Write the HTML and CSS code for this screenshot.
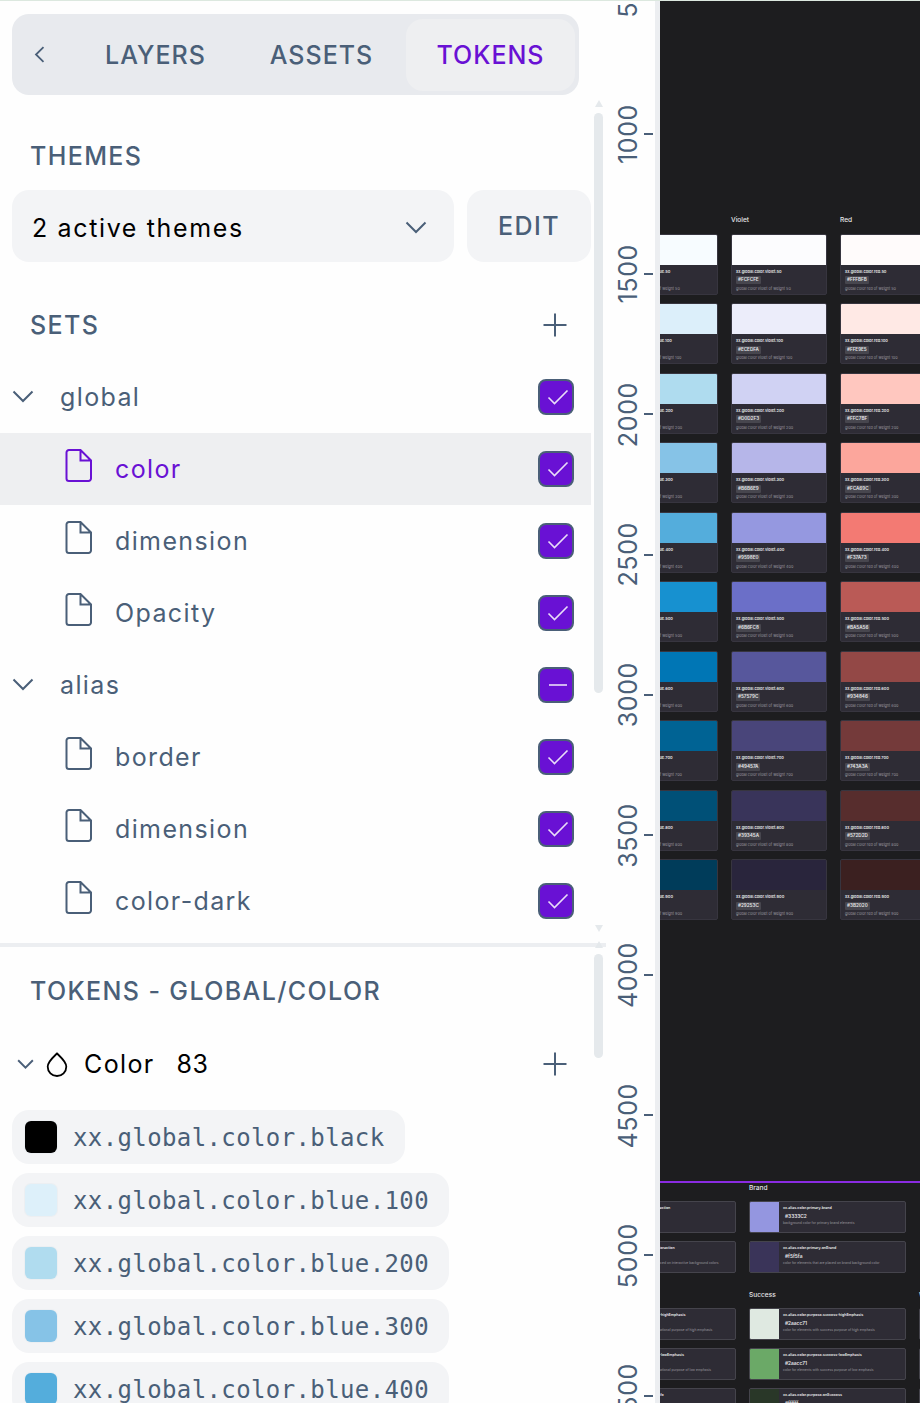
FILE: index.html
```html
<!DOCTYPE html>
<html lang="en">
<head>
<meta charset="utf-8">
<title>Design tokens</title>
<link rel="stylesheet" href="styles.css">
</head>
<body>
<svg width="0" height="0" class="defs">
  <symbol id="file" viewBox="0 0 28 34"><path d="M4 2H15.500L26 12.500V30.500a2.500 2.500 0 0 1-2.500 2.500H4A2.500 2.500 0 0 1 1.500 30.500V4.500A2.500 2.500 0 0 1 4 2zM15.500 2V12.500H26"/></symbol>
  <symbol id="down" viewBox="0 0 22 14"><path d="M1.500 1.500 11 11 20.500 1.500"/></symbol>
  <symbol id="plus" viewBox="0 0 24 24"><path d="M12 .5V23.500M.5 12H23.500"/></symbol>
  <symbol id="check" viewBox="0 0 22 16"><path d="M1.500 8.500 7.500 14.500 20.500 1.500"/></symbol>
  <symbol id="dash" viewBox="0 0 22 16"><path d="M2 8H20"/></symbol>
</svg>
<div class="app">
  <aside class="sidebar">
    <nav class="tabs">
      <span class="back"><svg width="11" height="17" viewBox="0 0 11 17"><path d="M9.500 1.200 2 8.500 9.500 15.800"/></svg></span>
      <span class="tab layers">LAYERS</span>
      <span class="tab assets">ASSETS</span>
      <span class="tab active">TOKENS</span>
    </nav>
    <section class="pane sets-pane">
      <div class="content">
        <h2 class="themes-title">THEMES</h2>
        <div class="theme-row">
          <div class="select"><span>2 active themes</span><svg width="22" height="14"><use href="#down"/></svg></div>
          <div class="edit">EDIT</div>
        </div>
        <div class="sets-head"><h2>SETS</h2><svg width="24" height="24"><use href="#plus"/></svg></div>
        <div class="row group"><svg class="chev" width="22" height="14"><use href="#down"/></svg><span class="label">global</span><i class="box"><svg width="22" height="16"><use href="#check"/></svg></i></div>
        <div class="row item selected"><svg class="file" width="28" height="34"><use href="#file"/></svg><span class="label">color</span><i class="box"><svg width="22" height="16"><use href="#check"/></svg></i></div>
        <div class="row item"><svg class="file" width="28" height="34"><use href="#file"/></svg><span class="label">dimension</span><i class="box"><svg width="22" height="16"><use href="#check"/></svg></i></div>
        <div class="row item"><svg class="file" width="28" height="34"><use href="#file"/></svg><span class="label">Opacity</span><i class="box"><svg width="22" height="16"><use href="#check"/></svg></i></div>
        <div class="row group"><svg class="chev" width="22" height="14"><use href="#down"/></svg><span class="label">alias</span><i class="box"><svg width="22" height="16"><use href="#dash"/></svg></i></div>
        <div class="row item"><svg class="file" width="28" height="34"><use href="#file"/></svg><span class="label">border</span><i class="box"><svg width="22" height="16"><use href="#check"/></svg></i></div>
        <div class="row item"><svg class="file" width="28" height="34"><use href="#file"/></svg><span class="label">dimension</span><i class="box"><svg width="22" height="16"><use href="#check"/></svg></i></div>
        <div class="row item"><svg class="file" width="28" height="34"><use href="#file"/></svg><span class="label">color-dark</span><i class="box"><svg width="22" height="16"><use href="#check"/></svg></i></div>
      </div>
      <div class="bar"><b class="up"></b><b class="thumb long"></b><b class="dn"></b></div>
    </section>
    <section class="pane tokens-pane">
      <div class="content">
        <h2 class="tokens-title">TOKENS - GLOBAL/COLOR</h2>
        <div class="type-row">
          <svg class="small-chev" width="17" height="11" viewBox="0 0 22 14"><path d="M1.500 1.500 11 11 20.500 1.500"/></svg>
          <svg class="drop" width="22" height="26" viewBox="0 0 22 26"><path d="M11 2.500C7 6.500 1.700 10.500 1.700 15.700a9.300 9.300 0 0 0 18.600 0C20.300 10.500 15 6.500 11 2.500z"/></svg>
          <span class="type-name">Color</span><span class="type-count">83</span>
          <svg class="add" width="24" height="24"><use href="#plus"/></svg>
        </div>
        <div class="pills">
          <div class="pill"><i class="c-black"></i><span>xx.global.color.black</span></div>
          <div class="pill"><i class="c-100"></i><span>xx.global.color.blue.100</span></div>
          <div class="pill"><i class="c-200"></i><span>xx.global.color.blue.200</span></div>
          <div class="pill"><i class="c-300"></i><span>xx.global.color.blue.300</span></div>
          <div class="pill"><i class="c-400"></i><span>xx.global.color.blue.400</span></div>
        </div>
      </div>
      <div class="bar"><b class="up"></b><b class="thumb short"></b></div>
    </section>
  </aside>
  <div class="ruler">
    <div class="mark"><span>500</span></div>
    <div class="mark"><span>1000</span></div>
    <div class="mark"><span>1500</span></div>
    <div class="mark"><span>2000</span></div>
    <div class="mark"><span>2500</span></div>
    <div class="mark"><span>3000</span></div>
    <div class="mark"><span>3500</span></div>
    <div class="mark"><span>4000</span></div>
    <div class="mark"><span>4500</span></div>
    <div class="mark"><span>5000</span></div>
    <div class="mark"><span>5500</span></div>
  </div>
  <main class="canvas">
    <div class="palette" id="palette"></div>
    <div class="alias" id="alias"></div>
  </main>
</div>
<script src="board.js"></script>
</body>
</html>
```

FILE: styles.css
```css
* { box-sizing: border-box; }
body { margin: 0; background: #fefefe; font-family: Inter, "Liberation Sans", sans-serif; font-size: 25px; letter-spacing: 1.380px; color: #4a5f78; }
h2 { margin: 0; font-size: 25px; font-weight: 500; line-height: 30px; }
svg { display: block; flex: none; fill: none; stroke: currentColor; stroke-width: 2; }
.defs { position: absolute; }
.app { display: grid; grid-template-columns: 606px 54px 260px; height: 1403px; overflow: hidden; border-top: 1px solid #dce8df; }
.sidebar { display: flex; flex-direction: column; min-width: 0; height: 1402px; overflow: hidden; }

.tabs { display: flex; flex: none; align-items: center; width: 567px; height: 81px; margin: 13px 0 0 12px; padding-right: 4px; background: #e8eaee; border-radius: 17px; }
.back { width: 54px; padding-left: 22px; }
.back svg { stroke-width: 1.8; }
.tab { font-weight: 500; height: 72px; line-height: 72px; text-align: center; white-space: nowrap; letter-spacing: 1px; }
.layers { width: 179px; }
.assets { width: 153px; }
.active { width: 169px; margin-left: auto; background: #eeeff1; border-radius: 17px; color: #6911d4; }

.pane { display: flex; flex: none; justify-content: space-between; }
.sets-pane { height: 852px; border-bottom: 4px solid #eceef1; }
.content { width: 591px; }
.themes-title { margin: 46px 0 0 30px; }
.theme-row { display: flex; gap: 13px; margin: 19px 0 0 12px; }
.select { display: flex; align-items: center; justify-content: space-between; width: 442px; height: 72px; padding: 3px 27px 0 20px; background: #f3f4f6; border-radius: 17px; color: #000; letter-spacing: 1.640px; }
.select svg { color: #4a5f78; }
.edit { flex: 1; height: 72px; line-height: 73px; background: #f3f4f6; border-radius: 17px; text-align: center; font-weight: 500; }
.sets-head { display: flex; align-items: center; justify-content: space-between; height: 30px; margin: 48px 24px 21px 30px; }
.row { display: flex; align-items: center; height: 72px; padding-right: 17px; }
.group { padding-left: 12px; }
.group .label { margin-left: 26px; }
.item { padding-left: 65px; }
.item .label { margin-left: 22px; }
.file { margin-bottom: 9px; }
.label { flex: 1; }
.selected { background: #eeeff1; color: #6911d4; }
.box { display: flex; align-items: center; justify-content: center; width: 36px; height: 36px; padding-left: 3px; border: 2px solid #4a5f78; border-radius: 8px; background: #6911d4; color: #e9ddf8; }
.box svg { stroke-width: 1.6; }

.bar { display: flex; flex-direction: column; align-items: center; width: 9px; margin-right: 3px; }
.thumb { width: 9px; border-radius: 5px; background: #e5e9ec; }
.up, .dn { border: solid transparent; border-width: 0 4.500px 7px; border-bottom-color: #e5e9ec; }
.dn { border-width: 7px 4.500px 0; border-top-color: #e5e9ec; margin-top: auto; margin-bottom: 11px; }
.up { margin-top: 5px; }
.long { height: 580px; margin-top: 6px; }
.tokens-pane .up { margin-top: -6px; }
.short { height: 104px; margin-top: 6px; }

.tokens-title { margin: 29px 0 0 30px; }
.type-row { display: flex; align-items: center; height: 36px; margin: 40px 24px 0 17px; color: #000; }
.small-chev { color: #4a5f78; stroke-width: 2.500; }
.drop { margin-left: 12px; stroke-width: 1.800; }
.type-name { margin-left: 16px; }
.type-count { margin-left: 22px; letter-spacing: .5px; }
.add { margin-left: auto; color: #4a5f78; }
.pills { display: flex; flex-direction: column; align-items: flex-start; gap: 9px; margin: 28px 0 0 12px; }
.pill { display: flex; align-items: center; height: 54px; padding: 0 20px 0 13px; border-radius: 17px; background: #f3f4f6; font-family: "DejaVu Sans Mono", monospace; font-size: 24px; letter-spacing: .385px; white-space: nowrap; }
.pill span { padding-top: 2px; }
.pill i { width: 32px; height: 32px; margin-right: 16px; border-radius: 6px; box-shadow: 0 0 0 1px #eceff2; }
.c-black { background: #000; }
.c-100 { background: #ddf0fa; }
.c-200 { background: #b0dcef; }
.c-300 { background: #86c3e7; }
.c-400 { background: #54addc; }

.ruler { display: flex; flex-direction: column; border-right: 5px solid #eceef1; overflow: hidden; }
.mark { flex: none; display: flex; align-items: center; justify-content: space-between; height: 140.200px; padding: 0 2px 0 7px; }
.mark:first-child { margin-top: -77.300px; }
.mark span { writing-mode: vertical-rl; transform: rotate(180deg); line-height: 30px; letter-spacing: .650px; }
.mark::after { content: ""; width: 9px; height: 2px; background: #4a5f78; }

.canvas { height: 1402px; overflow: hidden; background: #1d1d1f; color: #e6e6e8; letter-spacing: 0; }
.palette { display: grid; grid-template-columns: repeat(3, 96px); column-gap: 13px; height: 1180px; margin-left: -38px; padding-top: 214px; align-items: start; }
.title { height: 10px; font-size: 6.600px; line-height: 11px; font-weight: 500; white-space: nowrap; }
.column { display: flex; flex-direction: column; gap: 8.550px; }
.card { height: 61px; border: 1px solid #37353f; border-radius: 2px; overflow: hidden; background: #2e2c35; white-space: nowrap; }
.swatch { height: 30px; margin-bottom: 4px; }
.name { display: block; padding-left: 4px; font-size: 3.900px; line-height: 5px; font-weight: 600; }
.chip { display: block; width: fit-content; margin: 2.500px 0 1.500px 4px; padding: 0 2px; border-radius: 1px; background: #47464e; font-size: 4.600px; line-height: 8px; font-weight: 600; }
.desc { display: block; padding-left: 4px; font-size: 3.750px; line-height: 5px; color: #99979f; }

.alias { border-top: 2px solid #8a2be2; display: grid; grid-template-columns: repeat(3, 157px); column-gap: 13px; margin-left: -81px; }
.alias-col { display: flex; flex-direction: column; }
.alias-col .title { margin-bottom: 8px; }
.alias-card { display: flex; flex: none; height: 32px; margin-bottom: 7.700px; border: 1px solid #45444c; border-radius: 2px; overflow: hidden; background: #2e2c35; white-space: nowrap; }
.alias-card .swatch { flex: none; width: 29px; height: 30px; }
.alias-card .name { margin-top: 4px; font-size: 3.600px; }
.alias-card .desc { font-size: 3.330px; }
.alias-card .chip { margin: 1px 0 1px 4px; background: none; font-size: 4.800px; }
.alias-col .second { margin-top: 10px; }
.alias-col .lone { margin-top: 107.400px; }
```

FILE: board.js
```js
const weights = [50, 100, 200, 300, 400, 500, 600, 700, 800, 900];
const scales = [
  ['Blue', 'F7FCFF DCEFFA AFDCEF 86C3E7 54ADDC 1791D0 0076B5 006394 005077 003C5A'],
  ['Violet', 'FCFCFE ECEDFA D0D2F3 B6B6E9 9598E0 6B6FC8 57579C 49457A 39345A 29253C'],
  ['Red', 'FFFBFB FFE9E5 FFC7BF FCA69C F37A73 BA5A56 934846 743A3A 572D2D 3B2020']
];
document.getElementById('palette').innerHTML = scales.map(([title, list]) => {
  const key = title.toLowerCase();
  const cards = list.split(' ').map((hex, i) => `<div class="card"><div class="swatch" style="background:#${hex}"></div>
    <span class="name">xx.global.color.${key}.${weights[i]}</span><span class="chip">#${hex}</span>
    <span class="desc">global color ${key} of weight ${weights[i]}</span></div>`).join('');
  return `<div class="column"><div class="title">${key === 'blue' ? '&nbsp;' : title}</div>${cards}</div>`;
}).join('');

const groups = [
  [['', [
    ['primary.interaction', '#3333C2', 'color for interaction elements', '#1791d0'],
    ['primary.onInteraction', '#f5f5fa', 'color for elements that are placed on interactive background colors', '#005077']]],
  ['', [
    ['purpose.info-highEmphasis', '#2aacc7', 'color for elements with informational purpose of high emphasis', '#dceffa'],
    ['purpose.info-lowEmphasis', '#2aacc7', 'color for elements with informational purpose of low emphasis', '#54addc'],
    ['purpose.onInfo', '#ffffff', 'color for elements placed on info', '#003c5a']]]],
  [['Brand', [
    ['primary.brand', '#3333C2', 'background color for primary brand elements', '#9496e0'],
    ['primary.onBrand', '#f5f5fa', 'color for elements that are placed on brand background color', '#3a3459']]],
  ['Success', [
    ['purpose.success-highEmphasis', '#2aacc71', 'color for elements with success purpose of high emphasis', '#dfe9e1'],
    ['purpose.success-lowEmphasis', '#2aacc71', 'color for elements with success purpose of low emphasis', '#6ba967'],
    ['purpose.onSuccess', '#ffffff', 'color for elements placed on success', '#293728']]]],
  [['Warning', [
    ['', '', '', '#e5e2d8'],
    ['', '', '', '#b8a565'],
    ['', '', '', '#3a3523']]]]
];
const aliasCard = ([name, hex, desc, color]) => `<div class="alias-card"><div class="swatch" style="background:${color}"></div>` +
  (name ? `<div><span class="name">xx.alias.color.${name}</span><span class="chip">${hex}</span><span class="desc">${desc}</span></div>` : '') + '</div>';
document.getElementById('alias').innerHTML = groups.map(col => '<div class="alias-col">' + col.map(([title, cards], i) =>
  `<div class="title ${i ? 'second' : col.length === 1 ? 'lone' : ''}">${title}</div>` + cards.map(aliasCard).join('')
).join('') + '</div>').join('');
```
